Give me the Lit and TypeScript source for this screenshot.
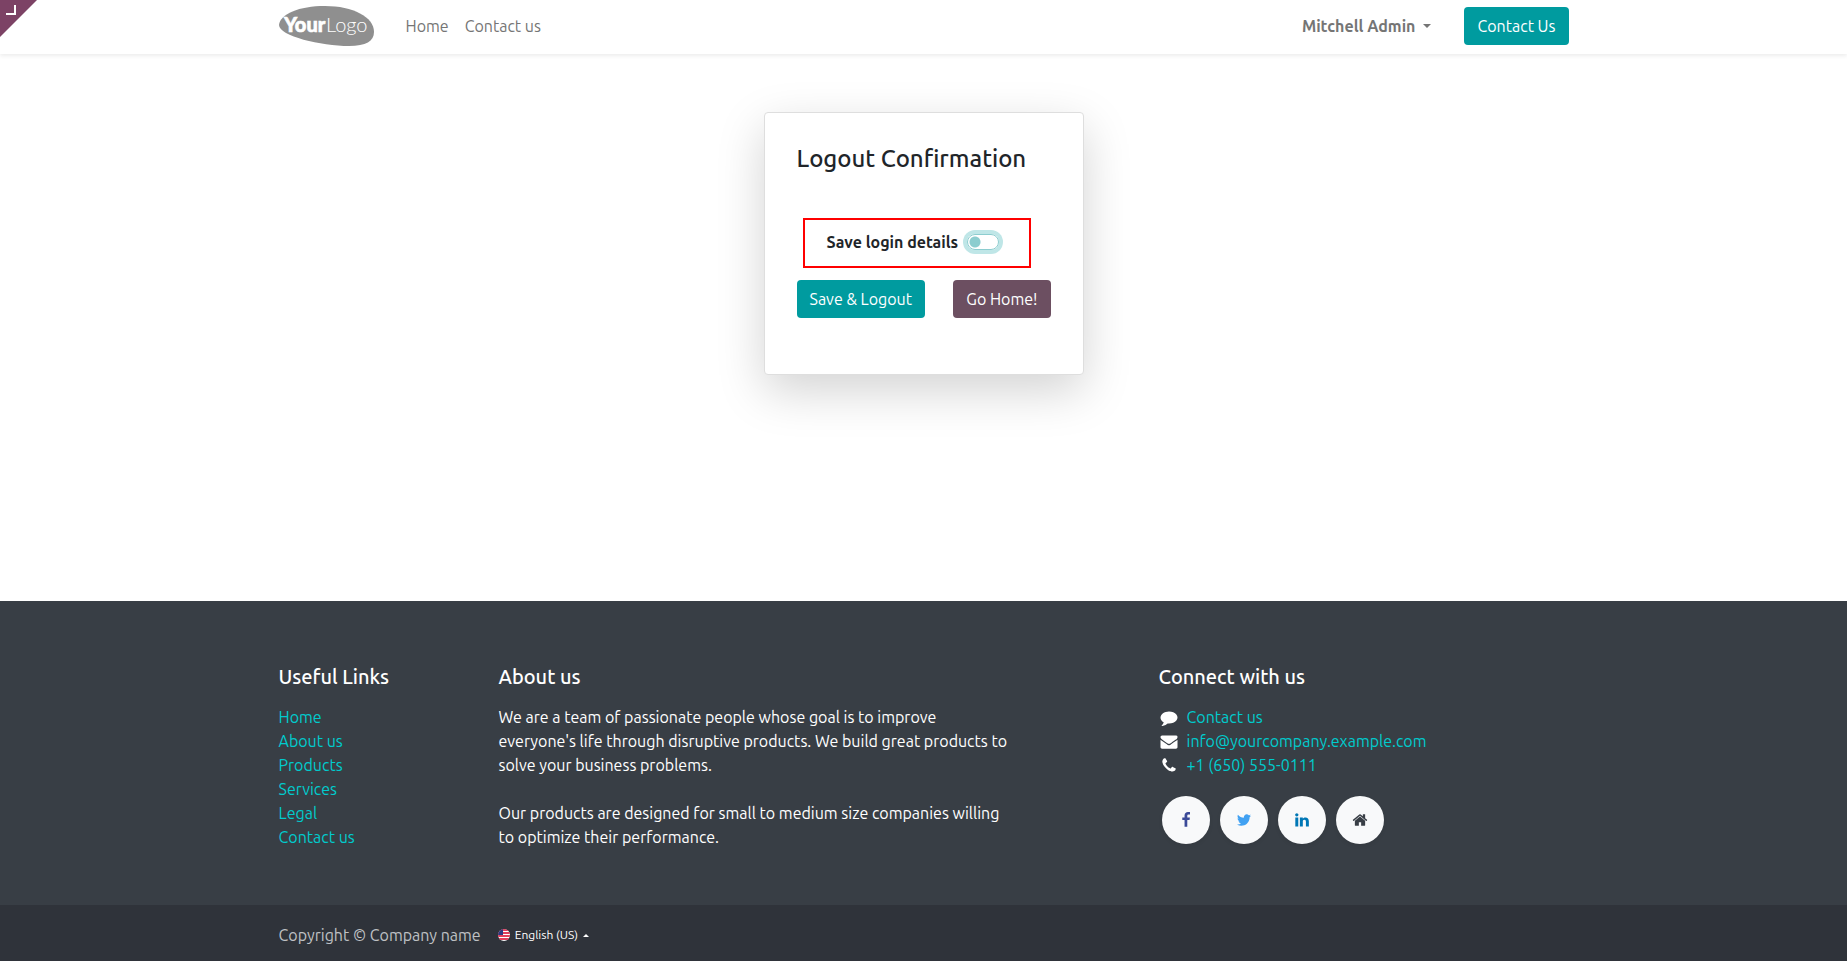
import { LitElement, html, css, svg } from "lit";
import { customElement } from "lit/decorators.js";

const icon = (cls: string, box: string, d: string) =>
  html`<svg class=${cls} viewBox=${box} aria-hidden="true">${svg`<path d=${d} fill="currentColor" />`}</svg>`;

const PATHS = {
  comment: "M1792 896q0 174-120 321.500t-326 233-450 85.500q-70 0-145-8-198 175-460 242-49 14-114 22-17 2-30.500-9t-17.500-29v-1q-3-4-.5-12t2-10 4.500-9.500l6-9 7-8.500 8-9q7-8 31-34.500t34.500-38 31-39.500 32.500-51 27-59 26-76q-157-89-247.500-220t-90.500-281q0-130 71-248.500t191-204.500 286-136.500 348-50.500q244 0 450 85.500t326 233 120 321.500z",
  envelope: "M1792 710v794q0 66-47 113t-113 47h-1472q-66 0-113-47t-47-113v-794q44 49 101 87 362 246 497 345 57 42 92.500 65.500t94.500 48 110 24.500h2q51 0 110-24.500t94.500-48 92.500-65.500q170-123 498-345 57-39 100-87zm0-294q0 79-49 151t-122 123q-376 261-468 325-10 7-42.500 30.500t-54 38-52 32.500-57.500 27-50 9h-2q-23 0-50-9t-57.500-27-52-32.500-54-38-42.500-30.500q-91-64-262-182.500t-205-142.500q-62-42-117-115.500t-55-136.500q0-78 41.500-130t118.500-52h1472q65 0 112.500 47t47.500 113z",
  phone: "M1600 1240q0 27-10 70.500t-21 68.500q-21 50-122 106-94 51-186 51-27 0-53-3.500t-57.500-12.500-47-14.500-55.500-20.500-49-18q-98-35-175-83-127-79-264-216t-216-264q-48-77-83-175-3-9-18-49t-20.500-55.500-14.500-47-12.500-57.500-3.500-53q0-92 51-186 56-101 106-122 25-11 68.500-21t70.500-10q14 0 21 3 18 6 53 76 11 19 30 54t35 63.500 31 53.500q3 4 17.500 25t21.500 35.500 7 28.500q0 20-28.500 50t-62 55-62 53-28.500 46q0 9 5 22.500t8.500 20.500 14 24 11.500 19q76 137 174 235t235 174q2 1 19 11.500t24 14 20.500 8.500 22.500 5q18 0 46-28.500t53-62 55-62 50-28.500q14 0 28.500 7t35.500 21.500 25 17.500q25 15 53.500 31t63.500 35 54 30q70 35 76 53 3 7 3 21z",
  facebook: "M1343 12v264h-157q-86 0-116 36t-30 108v189h293l-39 296h-254v759h-306v-759h-255v-296h255v-218q0-186 104-288.500t277-102.500q147 0 228 12z",
  twitter: "M1684 408q-67 98-162 167 1 14 1 42 0 130-38 259.500t-115.500 248.500-184.500 210.500-258 146-323 54.500q-271 0-496-145 35 4 78 4 225 0 401-138-105-2-188-64.500t-114-159.500q33 5 61 5 43 0 85-11-112-23-185.500-111.500t-73.500-205.500v-4q68 38 146 41-66-44-105-115t-39-154q0-88 44-163 121 149 294.500 238.500t371.500 99.500q-8-38-8-74 0-134 94.500-228.500t228.500-94.500q140 0 236 102 109-21 205-78-37 115-142 178 93-10 186-50z",
  linkedin: "M349 625v991h-330v-991h330zm21-306q1 73-50.500 122t-135.500 49h-2q-82 0-132-49t-50-122q0-74 51.500-122.500t134.500-48.500 133 48.500 51 122.500zm1166 729v568h-329v-530q0-105-40.500-164.500t-126.500-59.500q-63 0-105.500 34.500t-63.500 85.500q-11 30-11 81v553h-329q2-399 2-647t-1-296l-1-48h329v144h-2q20-32 41-56t56.500-52 87-43.500 114.500-15.500q171 0 275 113.500t104 332.500z",
  home: "M1472 992v480q0 26-19 45t-45 19h-384v-384h-256v384h-384q-26 0-45-19t-19-45v-480q0-1 .5-3t.5-3l575-474 575 474q1 2 1 6zm223-69l-62 74q-8 9-21 11h-3q-13 0-21-7l-692-577-692 577q-12 8-24 7-13-2-21-11l-62-74q-8-10-7-23.500t11-21.500l719-599q32-26 76-26t76 26l244 204v-195q0-14 9-23t23-9h192q14 0 23 9t9 23v408l219 182q10 8 11 21.500t-7 23.500z",
};

const BOX = "0 0 1792 1792";

@customElement("app-root")
export class AppRoot extends LitElement {
  static styles = css`
    :host {
      display: flex;
      flex-direction: column;
      min-height: 100vh;
      position: relative;
      box-sizing: border-box;
      background: #fff;
      color: #212529;
      font: 400 16px/24px Ubuntu, "Noto Sans", "Open Sans", sans-serif;
    }
    * { box-sizing: border-box; }
    a { text-decoration: none; color: inherit; }
    h3, h5, p, ul { margin: 0; padding: 0; font-weight: 500; }
    p { font-weight: 400; }
    ul { list-style: none; font-weight: 400; }
    button { font: inherit; cursor: pointer; }
    .container {
      width: 100%;
      max-width: 1320px;
      margin: 0 auto;
      padding: 0 15px;
    }
    .corner {
      position: absolute;
      top: 0;
      left: 0;
      width: 37px;
      height: 37px;
      padding: 0;
      border: 0;
      background: none;
    }
    .corner svg { display: block; }
    header { box-shadow: 0 2px 4px rgba(0, 0, 0, 0.075); }
    .bar { display: flex; align-items: center; height: 54px; padding-bottom: 2px; }
    .logo { display: block; margin-right: 24px; }
    .logo svg { display: block; }
    nav { display: flex; flex: 1; }
    nav a { padding: 8px; color: #757575; }
    .user {
      display: flex;
      align-items: center;
      gap: 8px;
      margin-right: 33px;
      padding: 0;
      border: 0;
      background: none;
      color: #757575;
      font-weight: 700;
    }
    .caret { border: 4px solid transparent; border-top-color: currentColor; border-bottom: 0; }
    .caret.up { border: 3px solid transparent; border-bottom-color: currentColor; border-top: 0; }
    .btn {
      display: inline-block;
      padding: 7px 13px;
      border: 0;
      border-radius: 4px;
      background: #009b9f;
      color: #fff;
      white-space: nowrap;
    }
    .btn.alt { background: #6c4f61; }
    main { flex: 1; padding: 58px 15px; }
    .card {
      width: 320px;
      max-width: 100%;
      margin: 0 auto;
      padding: 32px 32px 56px;
      border: 1px solid #dedede;
      border-radius: 4px;
      background: #fff;
      box-shadow: 0 16px 48px rgba(0, 0, 0, 0.176);
    }
    h3 { font-size: 24px; line-height: 28px; margin-bottom: 45px; white-space: nowrap; }
    .save {
      display: flex;
      align-items: center;
      gap: 9px;
      height: 50px;
      margin: 0 20px 12px 6px;
      padding: 0 0 2px 22px;
      border: 2px solid #f00;
      font-weight: 700;
      white-space: nowrap;
    }
    .switch {
      appearance: none;
      width: 32px;
      height: 16px;
      margin: 0;
      border: 1px solid #8ccdcf;
      border-radius: 8px;
      background: radial-gradient(circle at 7px 7px, #8ccdcf 5px, #fff 6px);
      box-shadow: 0 0 0 4px #bfe6e7;
    }
    .switch:checked { background: radial-gradient(circle at 23px 7px, #fff 5px, #009b9f 6px); }
    .actions { display: flex; justify-content: space-between; }
    footer { background: #383e45; color: #fff; }
    .cols {
      display: grid;
      grid-template-columns: 2fr 5fr 1fr 4fr;
      max-width: 1320px;
      margin: 0 auto;
      padding: 64px 0 56px;
    }
    .cols > section { padding: 0 15px; }
    .cols > .about { padding-right: 20px; }
    .connect { grid-column: 4; }
    h5 { font-size: 20px; line-height: 24px; margin-bottom: 16px; }
    footer section a { color: #00cbcd; }
    .about p + p { margin-top: 24px; }
    .contact li { display: flex; align-items: center; gap: 8px; }
    .glyph { width: 20px; height: 17px; }
    .social { display: flex; gap: 10px; padding: 19px 3px 0; }
    footer .social a {
      display: grid;
      place-items: center;
      width: 48px;
      height: 48px;
      border-radius: 50%;
      background: #f8f9fa;
      box-shadow: 0 2px 4px rgba(0, 0, 0, 0.075);
    }
    footer .social .fb { color: #3b4a98; }
    footer .social .tw { color: #41a1f2; }
    footer .social .in { color: #0077b5; }
    footer .social .hm { color: #383e45; }
    .soc { width: 16px; height: 16px; }
    .legal { background: #2f333a; color: #bfc1c4; }
    .legal .container { display: flex; align-items: center; gap: 17px; height: 56px; padding-top: 4px; }
    .lang {
      display: flex;
      align-items: center;
      gap: 5px;
      padding: 0;
      border: 0;
      background: none;
      color: #fff;
      font-size: 12px;
    }
  `;

  render() {
    return html`
      <header>
        <div class="container bar">
          <a class="logo" href="#" aria-label="Your Logo">
            <svg width="95" height="40" viewBox="0 0 95 40">
              <path d="M0 19C1 8 20 0 46 0C74 0 95 11 95 26C95 35 87 40 70 40C42 40 0 30 0 19Z" fill="#8f8f8f" />
              <text x="5" y="26" fill="#fff" stroke="#fff" stroke-width=".6" font-family="Lato, sans-serif" font-size="20" font-weight="900">Your</text>
              <text x="47" y="26" fill="#fff" font-family="Lato, sans-serif" font-size="20" font-weight="300">Logo</text>
            </svg>
          </a>
          <nav><a href="#">Home</a><a href="#">Contact us</a></nav>
          <button class="user">Mitchell Admin <span class="caret"></span></button>
          <a class="btn" href="#">Contact Us</a>
        </div>
      </header>
      <button class="corner" aria-label="Open backend">
        <svg width="37" height="37" viewBox="0 0 37 37">
          <path d="M0 0H37L0 37Z" fill="#7c4265" />
          <path d="M6 14H15V5" fill="none" stroke="#fff" stroke-width="2" />
        </svg>
      </button>
      <main>
        <form class="card" @submit=${(e: Event) => e.preventDefault()}>
          <h3>Logout Confirmation</h3>
          <div class="save">
            <label for="save">Save login details</label>
            <input class="switch" id="save" type="checkbox" role="switch" />
          </div>
          <div class="actions">
            <button class="btn">Save &amp; Logout</button>
            <a class="btn alt" href="#">Go Home!</a>
          </div>
        </form>
      </main>
      <footer>
        <div class="cols">
          <section>
            <h5>Useful Links</h5>
            <ul>
              ${["Home", "About us", "Products", "Services", "Legal", "Contact us"].map(
                (t) => html`<li><a href="#">${t}</a></li>`
              )}
            </ul>
          </section>
          <section class="about">
            <h5>About us</h5>
            <p>We are a team of passionate people whose goal is to improve everyone's life through disruptive products. We build great products to solve your business problems.</p>
            <p>Our products are designed for small to medium size companies willing to optimize their performance.</p>
          </section>
          <section class="connect">
            <h5>Connect with us</h5>
            <ul class="contact">
              <li>${icon("glyph", BOX, PATHS.comment)}<a href="#">Contact us</a></li>
              <li>${icon("glyph", BOX, PATHS.envelope)}<a href="#">info@yourcompany.example.com</a></li>
              <li>${icon("glyph", BOX, PATHS.phone)}<a href="#">+1 (650) 555-0111</a></li>
            </ul>
            <div class="social">
              <a class="fb" href="#" aria-label="Facebook">${icon("soc", BOX, PATHS.facebook)}</a>
              <a class="tw" href="#" aria-label="Twitter">${icon("soc", BOX, PATHS.twitter)}</a>
              <a class="in" href="#" aria-label="LinkedIn">${icon("soc", "-128 0 1792 1792", PATHS.linkedin)}</a>
              <a class="hm" href="#" aria-label="Website">${icon("soc", BOX, PATHS.home)}</a>
            </div>
          </section>
        </div>
        <div class="legal">
          <div class="container">
            <span>Copyright © Company name</span>
            <button class="lang">
              <svg width="12" height="12" viewBox="0 0 12 12">
                <clipPath id="disc"><circle cx="6" cy="6" r="6" /></clipPath>
                <g clip-path="url(#disc)">
                  <path d="M0 0H12V12H0Z" fill="#fff" />
                  <path d="M0 1H12M0 4H12M0 7H12M0 10H12" stroke="#d80027" stroke-width="1.500" />
                  <path d="M0 0H5V6H0Z" fill="#2b3a80" />
                </g>
              </svg>
              English (US) <span class="caret up"></span>
            </button>
          </div>
        </div>
      </footer>
    `;
  }
}
